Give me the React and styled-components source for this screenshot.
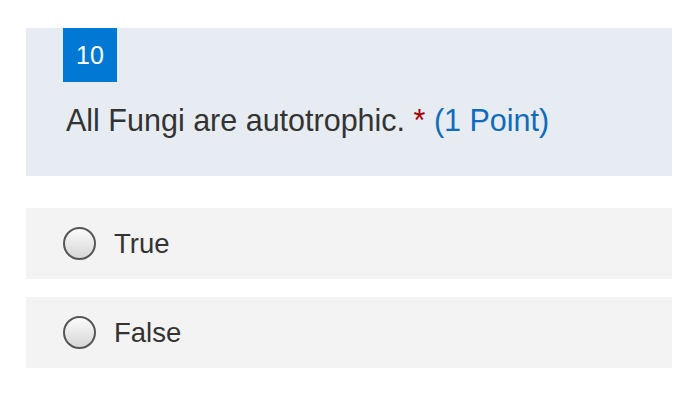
import React from 'react'
import styled, { createGlobalStyle } from 'styled-components';

const GlobalStyle = createGlobalStyle`
    body {
        margin: 0;
        background: #ffffff;
        font-family: "Liberation Sans", Arial, Helvetica, sans-serif;
    }
`;

const SPage = styled.div`
    width: 700px;
    height: 406px;
    padding: 28px 28px 0 26px;
    box-sizing: border-box;
`;

const SQuestion = styled.div`
    background-color: #e6ecf2;
    padding: 0 0 38px 37px;
`;

const SBadge = styled.div`
    width: 54px;
    height: 54px;
    background-color: #0078d4;
    color: #fff;
    font-size: 25px;
    display: flex;
    align-items: center;
    justify-content: center;
`;

const STitle = styled.div`
    margin-top: 20px;
    font-size: 30.5px;
    line-height: 36px;
    color: #333;
    padding-left: 3px;
`;

const SStar = styled.span`
    color: #a80000;
`;

const SPoint = styled.span`
    color: #0f6cbd;
`;

const SOptions = styled.div`
    margin-top: 32px;
    display: flex;
    flex-direction: column;
    gap: 18px;
`;

const SOption = styled.label`
    height: 71px;
    background-color: #f3f3f3;
    display: flex;
    align-items: center;
    gap: 18px;
    padding-left: 37px;
    font-size: 27.5px;
    line-height: 32px;
    color: #333;
`;

const SRadio = styled.span`
    width: 33px;
    height: 33px;
    border-radius: 50%;
    box-sizing: border-box;
    border: 2px solid #555;
    background: linear-gradient(#fbfbfb, #d6d6d6);
    margin-top: -1px;
`;

const options = ['True', 'False'];

const App = () => (
    <SPage>
        <GlobalStyle />
        <SQuestion>
            <SBadge>10</SBadge>
            <STitle>
                All Fungi are autotrophic. <SStar>*</SStar> <SPoint>(1 Point)</SPoint>
            </STitle>
        </SQuestion>
        <SOptions>
            {options.map(option => (
                <SOption key={option}>
                    <SRadio />
                    {option}
                </SOption>
            ))}
        </SOptions>
    </SPage>
);

export default App;
